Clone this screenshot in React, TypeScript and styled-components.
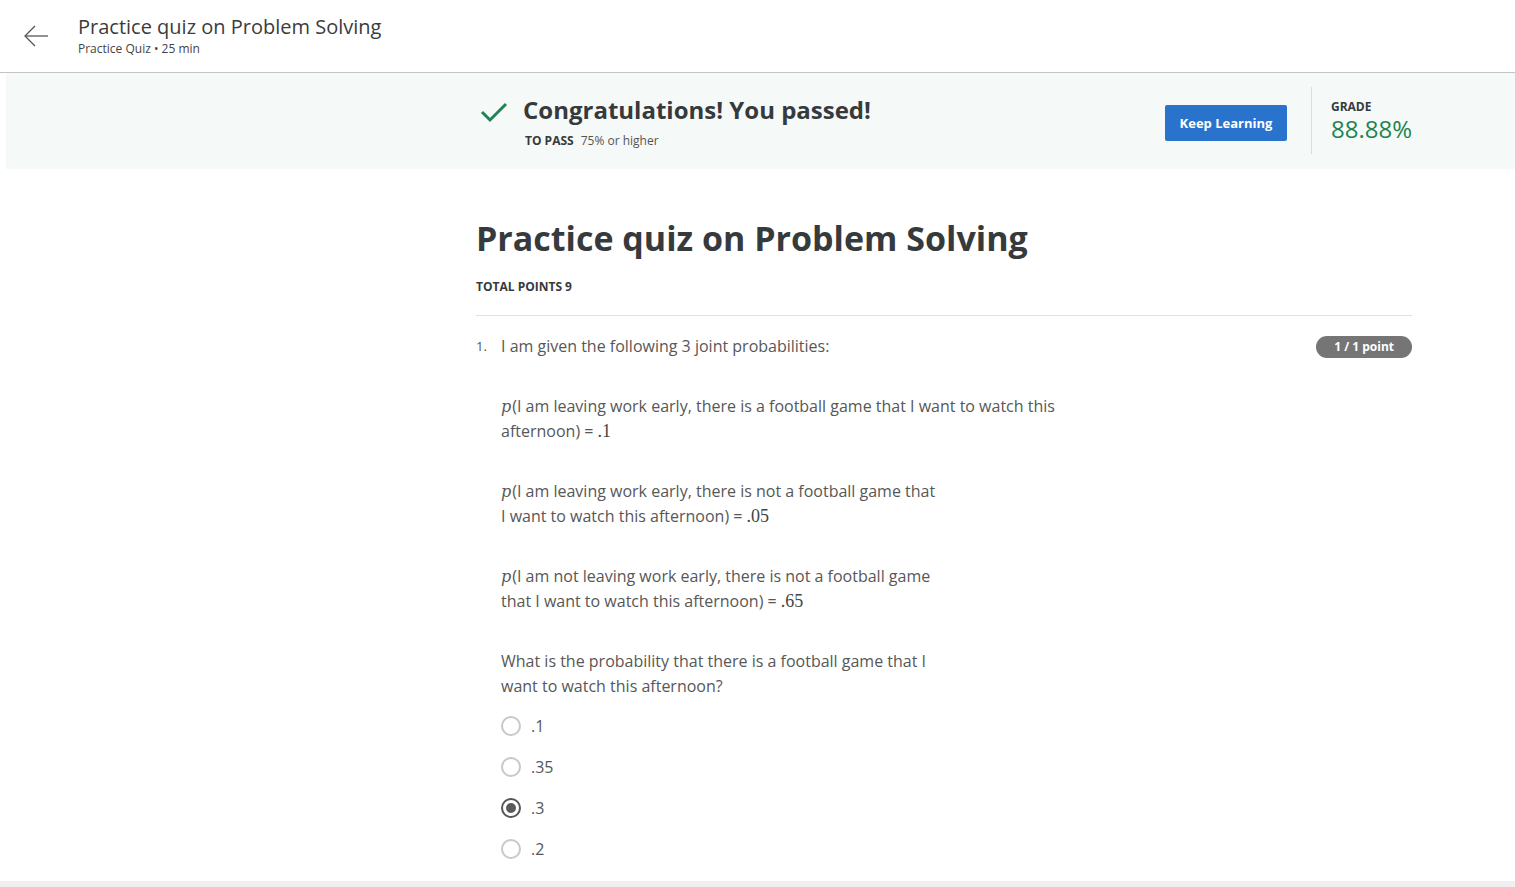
import React from "react";
import styled, { createGlobalStyle } from "styled-components";

const Global = createGlobalStyle`
  html, body { margin: 0; padding: 0; background: #fff; }
  body { font-family: "Open Sans", "Noto Sans", sans-serif; color: #373a3c; }
  * { box-sizing: border-box; }
`;

const Page = styled.div`
  width: 1515px;
  height: 887px;
  overflow: hidden;
  display: flex;
  flex-direction: column;
  position: relative;
`;

const Header = styled.header`
  height: 73px;
  border-bottom: 1px solid #c4c4c4;
  display: flex;
  align-items: center;
  padding-left: 22px;
  gap: 28px;
  flex-shrink: 0;
`;

const BackButton = styled.div`
  width: 28px;
  height: 28px;
  display: flex;
  align-items: center;
  justify-content: center;
  margin-top: -1px;
`;

const HeaderText = styled.div`
  display: flex;
  flex-direction: column;
  margin-top: -2px;
`;

const HeaderTitle = styled.div`
  font-size: 20px;
  line-height: 26px;
  color: #3c3c3c;
`;

const HeaderSub = styled.div`
  font-size: 12px;
  line-height: 17px;
  color: #444;
`;

const Banner = styled.section`
  margin-left: 6px;
  height: 96px;
  background: #f5f9f8;
  display: grid;
  grid-template-columns: 470px 1fr;
  flex-shrink: 0;
`;

const BannerInner = styled.div`
  grid-column: 2;
  display: flex;
  align-items: stretch;
  padding-right: 103px;
`;

const PassBlock = styled.div`
  flex: 1;
  display: flex;
  gap: 15px;
  padding-top: 23px;
  padding-left: 4px;
`;

const CheckWrap = styled.div`
  width: 28px;
  padding-top: 5px;
`;

const PassTexts = styled.div`
  display: flex;
  flex-direction: column;
`;

const Congrats = styled.div`
  font-size: 24px;
  font-weight: 700;
  line-height: 28px;
  color: #373a3c;
`;

const PassLine = styled.div`
  margin-top: 8px;
  margin-left: 2px;
  font-size: 12px;
  color: #555;
  display: flex;
  gap: 7px;
`;

const PassLabel = styled.span`
  font-weight: 700;
  color: #373a3c;
`;

const ActionBlock = styled.div`
  display: flex;
  align-items: center;
  padding-right: 24px;
  padding-top: 3px;
`;

const PrimaryButton = styled.button`
  width: 122px;
  height: 36px;
  background: #2a73cc;
  border: none;
  border-radius: 2px;
  color: #fff;
  font-family: inherit;
  font-size: 13px;
  font-weight: 700;
  cursor: pointer;
`;

const GradeBlock = styled.div`
  border-left: 1px solid #dcdcdc;
  margin: 14px 0 15px;
  padding-left: 19px;
  display: flex;
  flex-direction: column;
  padding-top: 12px;
`;

const GradeLabel = styled.div`
  font-size: 12px;
  font-weight: 700;
  color: #373a3c;
  line-height: 16px;
`;

const GradeValue = styled.div`
  font-size: 24px;
  color: #1f8354;
  line-height: 28px;
`;

const Main = styled.main`
  display: grid;
  grid-template-columns: 476px 936px;
  flex: 1;
`;

const Content = styled.div`
  grid-column: 2;
  padding-top: 47px;
`;

const Title = styled.h1`
  margin: 0;
  font-size: 34px;
  font-weight: 700;
  line-height: 44px;
  color: #373a3c;
`;

const TotalPoints = styled.div`
  margin-top: 18px;
  font-size: 12px;
  font-weight: 700;
  color: #373a3c;
  padding-bottom: 20px;
  border-bottom: 1px solid #e1e1e1;
`;

const QuestionRow = styled.div`
  display: flex;
  padding-top: 18px;
`;

const QNum = styled.div`
  width: 25px;
  font-size: 13px;
  color: #555;
  line-height: 24px;
`;

const QBody = styled.div`
  flex: 1;
  font-size: 16px;
  line-height: 25px;
  color: #575757;
  font-weight: 400;
`;

const QHead = styled.div`
  display: flex;
  justify-content: space-between;
  align-items: center;
`;

const Badge = styled.span`
  background: #757575;
  color: #fff;
  border-radius: 11px;
  height: 22px;
  padding: 0 18px;
  display: inline-flex;
  align-items: center;
  font-size: 12px;
  font-weight: 700;
`;

const Para = styled.p<{ $width?: number }>`
  margin: 35px 0 0;
  max-width: ${(p) => p.$width ?? 560}px;
`;

const MathVar = styled.span`
  font-family: "DejaVu Serif", "Liberation Serif", serif;
  font-style: italic;
  font-size: 16px;
  margin-right: 1px;
`;

const MathNum = styled.span`
  font-family: "Liberation Serif", "DejaVu Serif", serif;
  font-size: 18px;
  color: #444;
`;

const Options = styled.div`
  margin-top: 16px;
  display: flex;
  flex-direction: column;
  gap: 19px;
`;

const OptionRow = styled.label`
  display: flex;
  align-items: center;
  gap: 10px;
  height: 22px;
`;

const Radio = styled.span<{ $checked?: boolean }>`
  width: 20px;
  height: 20px;
  border-radius: 50%;
  border: 2px solid ${(p) => (p.$checked ? "#555" : "#c8c8c8")};
  display: flex;
  align-items: center;
  justify-content: center;
  &::after {
    content: "";
    width: 10px;
    height: 10px;
    border-radius: 50%;
    background: ${(p) => (p.$checked ? "#5a5a5a" : "transparent")};
  }
`;

const Footer = styled.div`
  position: absolute;
  left: 0;
  right: 0;
  bottom: 0;
  height: 6px;
  background: #f0f0f0;
`;

const options = [".1", ".35", ".3", ".2"];

export default function App() {
  return (
    <Page>
      <Global />
      <Header>
        <BackButton>
          <svg width="26" height="24" viewBox="0 0 26 24" fill="none" stroke="#555" strokeWidth="1.3">
            <path d="M25 12H3" />
            <path d="M12 2L2 12L12 22" />
          </svg>
        </BackButton>
        <HeaderText>
          <HeaderTitle>Practice quiz on Problem Solving</HeaderTitle>
          <HeaderSub>Practice Quiz • 25 min</HeaderSub>
        </HeaderText>
      </Header>
      <Banner>
        <BannerInner>
          <PassBlock>
            <CheckWrap>
              <svg width="28" height="22" viewBox="0 0 28 22" fill="none" stroke="#1f8354" strokeWidth="3">
                <path d="M2 11L10 19L26 3" />
              </svg>
            </CheckWrap>
            <PassTexts>
              <Congrats>Congratulations! You passed!</Congrats>
              <PassLine>
                <PassLabel>TO PASS</PassLabel>
                <span>75% or higher</span>
              </PassLine>
            </PassTexts>
          </PassBlock>
          <ActionBlock>
            <PrimaryButton>Keep Learning</PrimaryButton>
          </ActionBlock>
          <GradeBlock>
            <GradeLabel>GRADE</GradeLabel>
            <GradeValue>88.88%</GradeValue>
          </GradeBlock>
        </BannerInner>
      </Banner>
      <Main>
        <Content>
          <Title>Practice quiz on Problem Solving</Title>
          <TotalPoints>TOTAL POINTS 9</TotalPoints>
          <QuestionRow>
            <QNum>1.</QNum>
            <QBody>
              <QHead>
                <span>I am given the following 3 joint probabilities:</span>
                <Badge>1 / 1 point</Badge>
              </QHead>
              <Para $width={570}>
                <MathVar>p</MathVar>(I am leaving work early, there is a football game that I want to watch this afternoon) = <MathNum>.1</MathNum>
              </Para>
              <Para $width={438}>
                <MathVar>p</MathVar>(I am leaving work early, there is not a football game that I want to watch this afternoon) = <MathNum>.05</MathNum>
              </Para>
              <Para $width={438}>
                <MathVar>p</MathVar>(I am not leaving work early, there is not a football game that I want to watch this afternoon) = <MathNum>.65</MathNum>
              </Para>
              <Para $width={438}>
                What is the probability that there is a football game that I want to watch this afternoon?
              </Para>
              <Options>
                {options.map((o, i) => (
                  <OptionRow key={o}>
                    <Radio $checked={i === 2} />
                    <span>{o}</span>
                  </OptionRow>
                ))}
              </Options>
            </QBody>
          </QuestionRow>
        </Content>
      </Main>
      <Footer />
    </Page>
  );
}
